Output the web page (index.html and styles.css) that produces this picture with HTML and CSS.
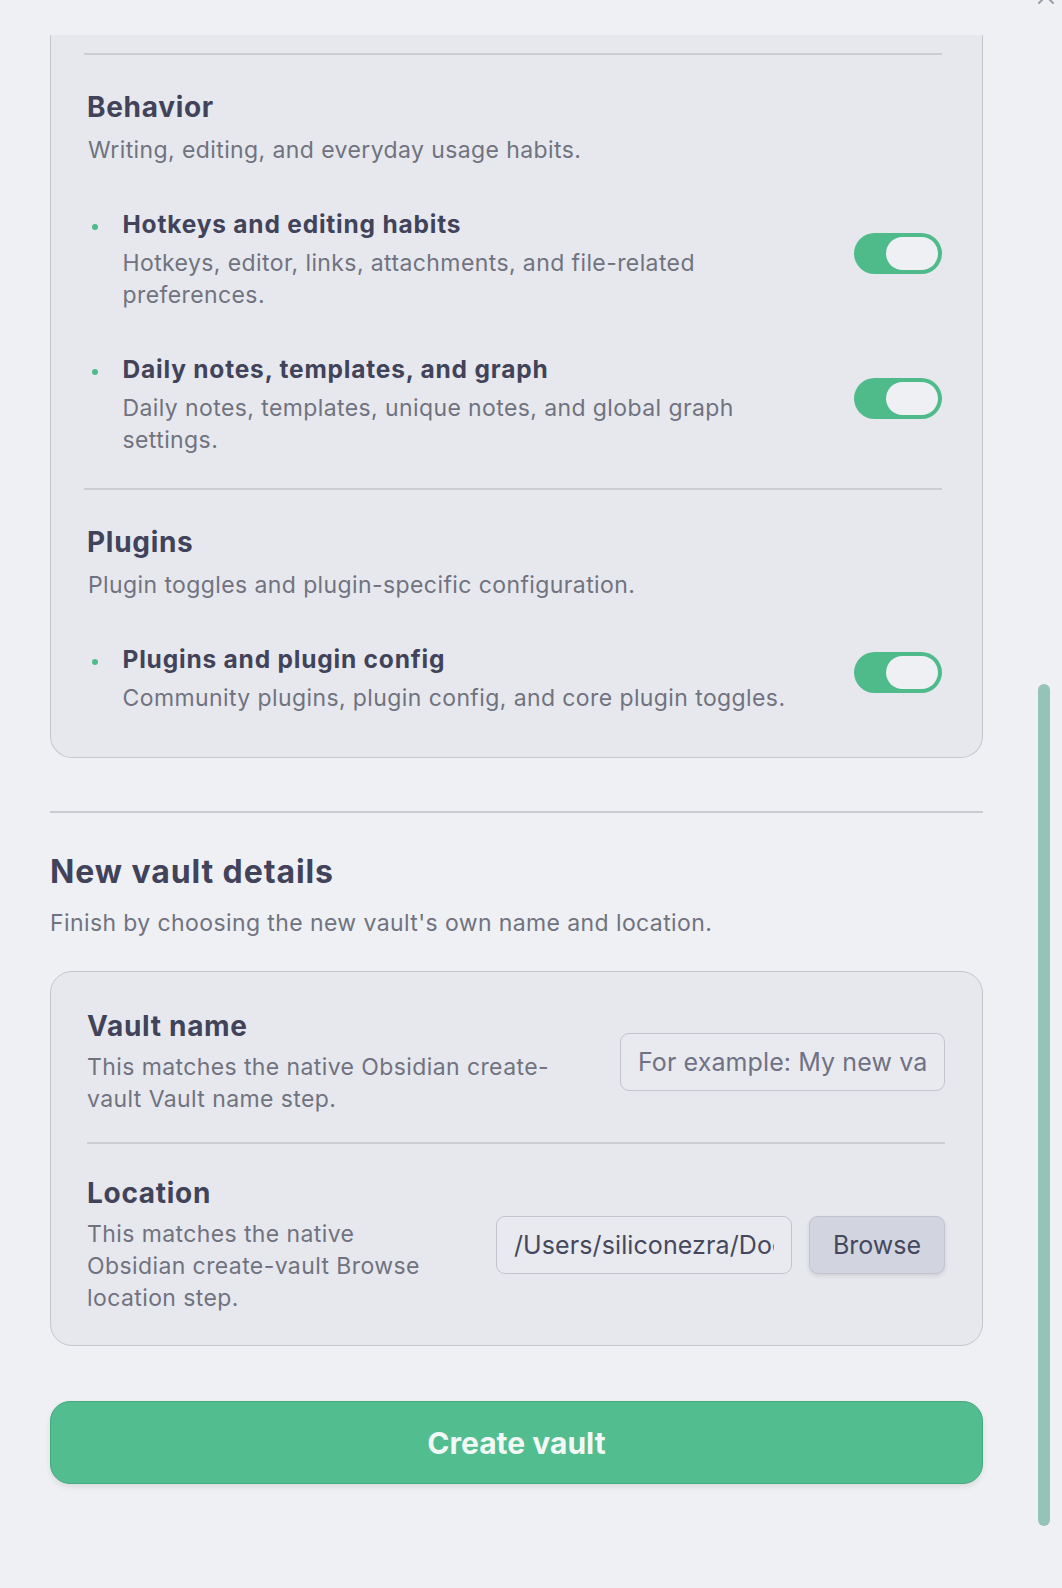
FILE: index.html
```html
<!DOCTYPE html>
<html lang="en">
<head>
<meta charset="utf-8">
<title>Create vault</title>
<link rel="stylesheet" href="styles.css">
</head>
<body>
<div class="modal">
  <div class="modal-top">
    <svg class="close-icon" width="24" height="24" viewBox="0 0 24 24" fill="none" stroke="currentColor" stroke-width="2" stroke-linecap="round"><path d="M5 5l14 14M19 5L5 19"/></svg>
  </div>
  <div class="scroll">
    <div class="content">
      <div class="card card-clipped">
        <div class="divider"></div>
        <section class="group">
          <h3 class="group-title">Behavior</h3>
          <p class="group-desc">Writing, editing, and everyday usage habits.</p>
          <div class="item">
            <span class="bullet-col"><span class="bullet"></span></span>
            <div class="item-info">
              <div class="item-title">Hotkeys and editing habits</div>
              <div class="item-desc">Hotkeys, editor, links, attachments, and file-related preferences.</div>
            </div>
            <div class="toggle"><span class="knob"></span></div>
          </div>
          <div class="item">
            <span class="bullet-col"><span class="bullet"></span></span>
            <div class="item-info">
              <div class="item-title">Daily notes, templates, and graph</div>
              <div class="item-desc">Daily notes, templates, unique notes, and global graph settings.</div>
            </div>
            <div class="toggle"><span class="knob"></span></div>
          </div>
        </section>
        <div class="divider"></div>
        <section class="group group-last">
          <h3 class="group-title">Plugins</h3>
          <p class="group-desc">Plugin toggles and plugin-specific configuration.</p>
          <div class="item">
            <span class="bullet-col"><span class="bullet"></span></span>
            <div class="item-info">
              <div class="item-title">Plugins and plugin config</div>
              <div class="item-desc">Community plugins, plugin config, and core plugin toggles.</div>
            </div>
            <div class="toggle"><span class="knob"></span></div>
          </div>
        </section>
      </div>

      <div class="section-rule"></div>
      <h2 class="section-title">New vault details</h2>
      <p class="section-desc">Finish by choosing the new vault's own name and location.</p>

      <div class="card vault-card">
        <div class="setting setting-first">
          <div class="setting-info">
            <div class="setting-name">Vault name</div>
            <div class="setting-desc">This matches the native Obsidian create-vault Vault name step.</div>
          </div>
          <div class="setting-control">
            <input class="text-input name-input" type="text" placeholder="For example: My new vault">
          </div>
        </div>
        <div class="setting setting-divided">
          <div class="setting-info">
            <div class="setting-name">Location</div>
            <div class="setting-desc">This matches the native Obsidian create-vault Browse location step.</div>
          </div>
          <div class="setting-control">
            <input class="text-input path-input" type="text" value="/Users/siliconezra/Documents/Obsidian">
            <button class="browse-btn" type="button">Browse</button>
          </div>
        </div>
      </div>

      <button class="cta" type="button">Create vault</button>
    </div>
    <div class="scroll-thumb"></div>
  </div>
</div>
</body>
</html>
```

FILE: styles.css
```css
* {
  box-sizing: border-box;
}

html, body {
  margin: 0;
  padding: 0;
}

body {
  background: #eff0f4;
  font-family: Inter, "Noto Sans", "Liberation Sans", sans-serif;
  color: #41435a;
  width: 1062px;
  height: 1588px;
  overflow: hidden;
}

.modal {
  width: 1062px;
  height: 1588px;
  display: flex;
  flex-direction: column;
}

.modal-top {
  height: 35px;
  flex: none;
  position: relative;
  overflow: hidden;
}

.close-icon {
  position: absolute;
  top: -16px;
  right: 4px;
  color: #9a9daa;
}

.scroll {
  position: relative;
  flex: 1;
  overflow: hidden;
}

.content {
  padding: 0 79px 0 50px;
}

.card {
  background: #e7e8ed;
  border: 1px solid #c4c6cd;
  border-radius: 22px;
}

.card-clipped {
  border-top: none;
  border-radius: 0 0 22px 22px;
  padding: 18px 40px 43px 33px;
}

.divider {
  height: 2px;
  background: #cbcdd3;
}

.group {
  padding-bottom: 32px;
}

.group-last {
  padding-bottom: 0;
}

.group-title {
  margin: 35px 0 0;
  padding-left: 3px;
  font-size: 28px;
  line-height: 34px;
  font-weight: 700;
  letter-spacing: 0.7px;
  color: #41435a;
}

.group-desc {
  margin: 10px 0 0;
  padding-left: 4px;
  font-size: 23px;
  line-height: 32px;
  letter-spacing: 0.4px;
  color: #70737f;
}

.item {
  display: flex;
  align-items: center;
  margin-top: 43px;
}

.bullet-col {
  flex: none;
  width: 38.5px;
  align-self: flex-start;
  padding-top: 15px;
}

.bullet {
  display: block;
  width: 6px;
  height: 6px;
  margin-left: 8px;
  border-radius: 50%;
  background: #4fbb8b;
}

.item-info {
  flex: 1;
  margin-right: 42px;
}

.item-title {
  font-size: 24.5px;
  line-height: 30px;
  font-weight: 700;
  letter-spacing: 0.8px;
  color: #41435a;
}

.item-desc {
  margin-top: 8px;
  font-size: 23px;
  line-height: 32px;
  letter-spacing: 0.4px;
  color: #70737f;
}

.toggle {
  flex: none;
  position: relative;
  width: 88px;
  height: 41px;
  margin-bottom: 13px;
  border-radius: 21px;
  background: #4fbb8b;
}

.knob {
  position: absolute;
  top: 4px;
  right: 4px;
  width: 52px;
  height: 33px;
  border-radius: 17px;
  background: #eff0f3;
}

.section-rule {
  margin-top: 53px;
  height: 2px;
  background: #c9cbd1;
}

.section-title {
  margin: 40px 0 0;
  font-size: 32px;
  line-height: 38px;
  font-weight: 700;
  letter-spacing: 0.9px;
  color: #41435a;
}

.section-desc {
  margin: 16px 0 0;
  font-size: 23px;
  line-height: 32px;
  letter-spacing: 0.4px;
  color: #70737f;
}

.vault-card {
  margin-top: 32px;
  padding: 36.5px 37px 31.5px 36px;
}

.setting {
  display: flex;
  align-items: center;
  gap: 56px;
}

.setting-first {
  padding-bottom: 27.5px;
}

.setting-divided {
  border-top: 2px solid #cbcdd3;
  padding-top: 31.5px;
}

.setting-info {
  flex: 1;
}

.setting-name {
  font-size: 28px;
  line-height: 34px;
  font-weight: 700;
  letter-spacing: 0.7px;
  color: #41435a;
}

.setting-desc {
  margin-top: 8px;
  font-size: 23px;
  line-height: 32px;
  letter-spacing: 0.4px;
  color: #70737f;
}

.setting-control {
  flex: none;
  display: flex;
  align-items: center;
  gap: 17px;
}

.text-input {
  height: 58px;
  padding: 0 17px;
  border: 1.5px solid #c3c5cd;
  border-radius: 9px;
  background: #e9eaef;
  font-family: Inter, "Noto Sans", "Liberation Sans", sans-serif;
  font-size: 25px;
  letter-spacing: 0.1px;
  color: #45485d;
  outline: none;
}

.text-input::placeholder {
  color: #6f7284;
}

.name-input {
  width: 325px;
}

.path-input {
  width: 296px;
}

.browse-btn {
  width: 136px;
  height: 58px;
  border: 1.5px solid #c0c3cd;
  border-radius: 9px;
  background: #d2d5df;
  box-shadow: 0 2px 4px rgba(40, 44, 60, 0.12);
  font-family: Inter, "Noto Sans", "Liberation Sans", sans-serif;
  font-size: 25px;
  color: #45485d;
}

.cta {
  display: block;
  width: 100%;
  height: 83px;
  margin-top: 55px;
  border: 1px solid #47a97f;
  border-radius: 20px;
  background: #52bd8f;
  box-shadow: 0 3px 5px rgba(40, 60, 50, 0.1);
  font-family: Inter, "Noto Sans", "Liberation Sans", sans-serif;
  font-size: 30px;
  font-weight: 700;
  color: #f2f8f5;
}

.scroll-thumb {
  position: absolute;
  left: 1038px;
  top: 649px;
  width: 12px;
  height: 842px;
  border-radius: 6px;
  background: #95c4b6;
}
```
